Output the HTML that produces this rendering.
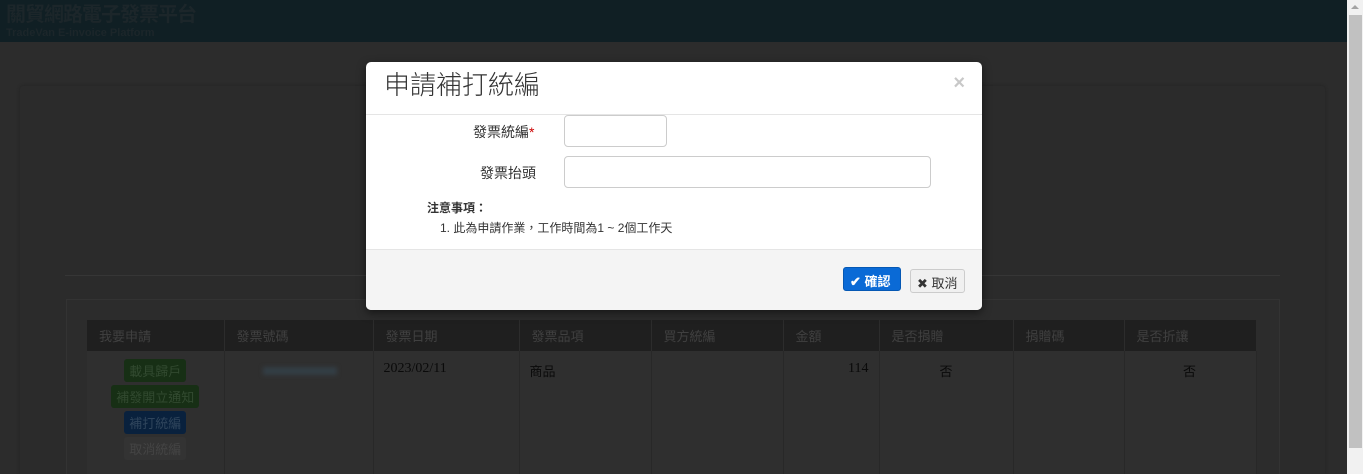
<!DOCTYPE html>
<html><head><meta charset="utf-8"><style>
*{box-sizing:border-box;margin:0;padding:0}
html{width:1363px;height:474px;overflow:hidden}
body{width:1363px;height:474px;overflow:hidden;background:#2c2c2c;font-family:"Liberation Sans","Noto Sans CJK TC",sans-serif;position:relative}
.hdr{position:absolute;left:0;top:0;width:1347px;height:42px;background:#101f24}
.hdr .t1{position:absolute;left:6px;top:4px;font-size:20px;line-height:22px;color:#1c262a;font-weight:bold;letter-spacing:-1px}
.hdr .t2{position:absolute;left:6px;top:27px;font-size:11px;line-height:12px;color:#1c262a;font-weight:bold}
.sb{position:absolute;left:1347px;top:0;width:16px;height:474px;background:#f1f1f1}
.sb div{position:absolute;left:2px;top:15px;width:13px;height:433px;background:#c1c1c1}
.sb span{position:absolute;left:4px;top:5px;width:0;height:0;border-left:4px solid transparent;border-right:4px solid transparent;border-bottom:4px solid #a3a3a3}
.card{position:absolute;left:20px;top:86px;width:1305px;height:388px;background:#2b2b2b;border-radius:3px 3px 0 0;box-shadow:0 0 3px #222}
.hr{position:absolute;left:65px;top:275px;width:1215px;height:1px;background:#363636}
.panel{position:absolute;left:66px;top:299px;width:1214px;height:175px;border:1px solid #333;border-bottom:none;background:#2c2c2c}
.tw{position:absolute;left:87px;top:320px;width:1170px;height:154px;overflow:hidden}
table{width:1170px;border-collapse:collapse;font-size:13px}
th{background:#1f1f1f;color:#404040;font-weight:normal;text-align:left;height:31px;padding-left:12px;border-right:1px solid #2c2c2c}
td{background:#2f2f2f;height:130px;vertical-align:top;border-right:1px solid #282828;color:#0a0a0a;padding:10px 10px;font-size:14px;font-family:"Liberation Serif","Noto Serif CJK SC",serif}
.b{display:block;margin:0 auto 3px;width:max-content;padding:2px 5px;border-radius:3px;color:#324a30;font-family:"Liberation Sans","Noto Sans CJK TC",sans-serif;font-size:13px}
.g{background:#172f15}.bl{background:#09213d;color:#2f455c}.gr{background:#333;color:#444}
.modal{position:absolute;left:366px;top:62px;width:616px;height:248px;background:#fff;border-radius:5px;overflow:hidden;box-shadow:0 3px 9px rgba(0,0,0,.5)}
.mh{height:53px;border-bottom:1px solid #e5e5e5;position:relative}
.mh h4{position:absolute;left:18px;top:7px;font-size:26px;line-height:32px;font-weight:300;color:#333}
.x{position:absolute;right:17px;top:10px;font-size:20px;font-weight:bold;color:#c8c8c8}
.lbl{position:absolute;font-size:14px;color:#333}
.inp{position:absolute;border:1px solid #ccc;border-radius:4px;height:32px}
.mf{position:absolute;left:0;top:187px;width:616px;height:61px;background:#f4f4f4;border-top:1px solid #e5e5e5}
.btn{position:absolute;top:17px;height:24px;border-radius:3px;font-size:13px;padding:3px 6px}
</style></head><body>
<div class="hdr"><div class="t1">關貿網路電子發票平台</div><div class="t2">TradeVan E-invoice Platform</div></div>
<div class="card"></div>
<div class="hr"></div>
<div class="panel"></div>
<div class="tw"><table><tr><th style="width:137px">我要申請</th><th style="width:149px">發票號碼</th><th style="width:146px">發票日期</th><th style="width:132px">發票品項</th><th style="width:132px">買方統編</th><th style="width:96px">金額</th><th style="width:134px">是否捐贈</th><th style="width:111px">捐贈碼</th><th>是否折讓</th></tr>
<tr><td style="padding:8px 0"><span class="b g">載具歸戶</span><span class="b g">補發開立通知</span><span class="b bl">補打統編</span><span class="b gr">取消統編</span></td>
<td><div style="margin:6px 0 0 28px;width:74px;height:8px;background:#333e45;filter:blur(2px)"></div></td>
<td>2023/02/11</td><td style="font-family:'Liberation Sans','Noto Sans CJK TC',sans-serif;font-size:13px">商品</td><td></td><td style="text-align:right">114</td><td style="text-align:center;font-family:'Liberation Sans','Noto Sans CJK TC',sans-serif;font-size:13px">否</td><td></td><td style="text-align:right;padding-right:60px;font-family:'Liberation Sans','Noto Sans CJK TC',sans-serif;font-size:13px">否</td></tr></table></div>
<div class="sb"><span></span><div></div></div>
<div class="modal">
<div class="mh"><h4>申請補打統編</h4><span class="x">×</span></div>
<div class="lbl" style="left:107px;top:60px">發票統編<span style="color:#c00">*</span></div>
<div class="inp" style="left:198px;top:53px;width:103px"></div>
<div class="lbl" style="left:114px;top:101px">發票抬頭</div>
<div class="inp" style="left:198px;top:94px;width:367px"></div>
<div class="lbl" style="left:61px;top:137px;font-size:12px;font-weight:bold">注意事項：</div>
<div class="lbl" style="left:74px;top:157px;font-size:12px">1. 此為申請作業，工作時間為1 ~ 2個工作天</div>
<div class="mf">
<div class="btn" style="left:477px;width:58px;background:#0a6ad6;color:#fff;font-weight:bold;border:1px solid #0558b4">✔ 確認</div>
<div class="btn" style="left:544px;width:55px;background:#f0f0f0;color:#333;border:1px solid #ccc;top:19px">✖ 取消</div>
</div></div>
</body></html>
